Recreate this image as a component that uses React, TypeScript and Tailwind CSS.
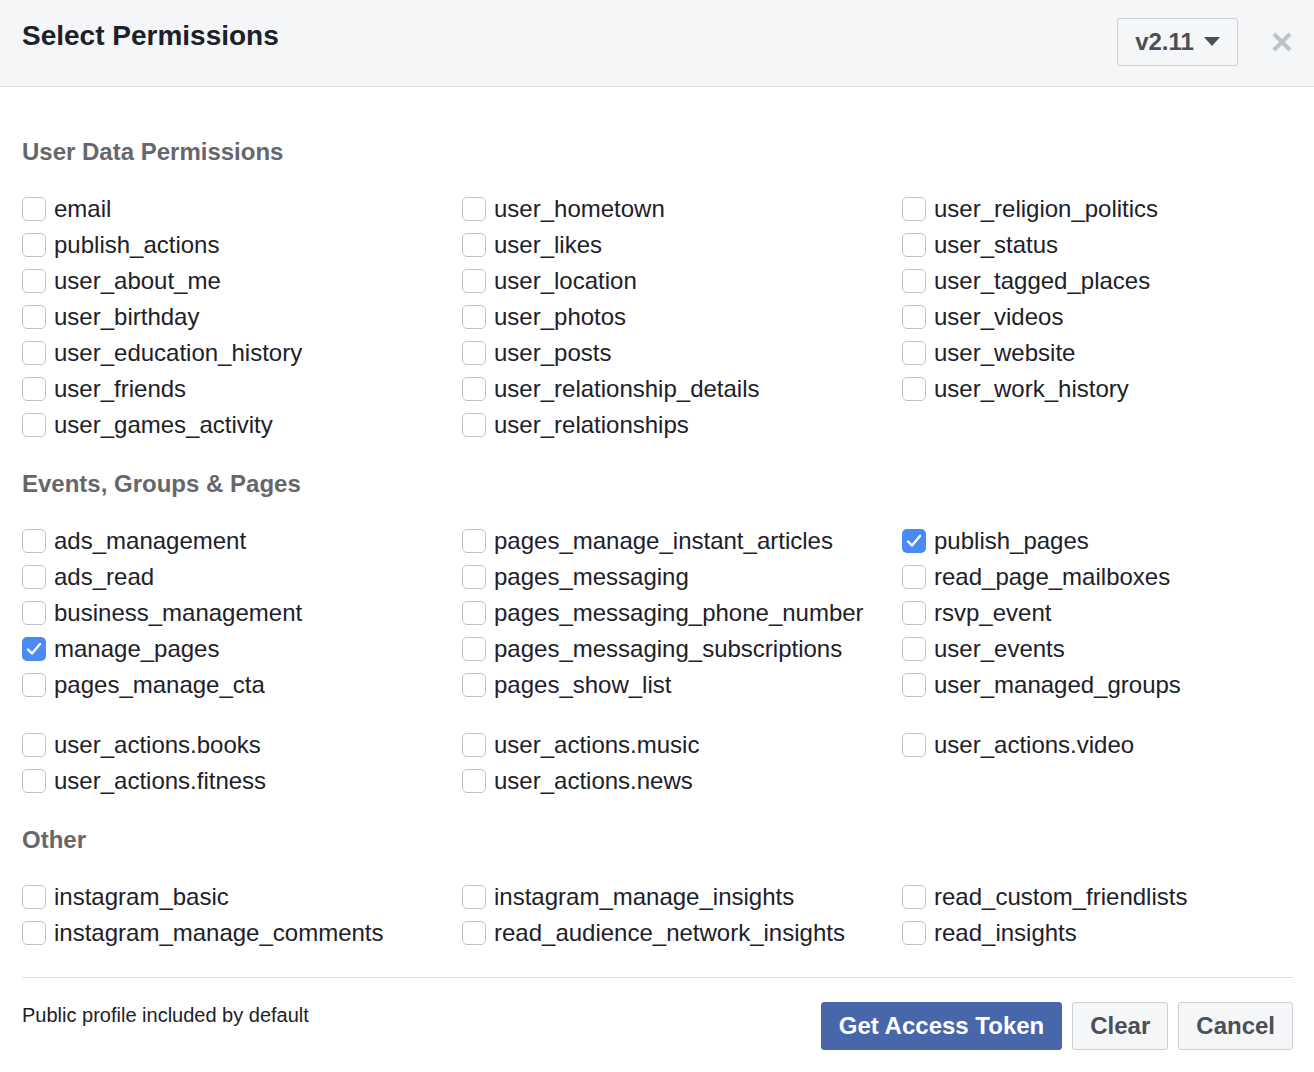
import { useState } from 'react'

// each section can hold several groups of three columns
const SECTIONS: { title: string; groups: string[][][] }[] = [
  {
    title: 'User Data Permissions',
    groups: [
      [
        ['email', 'publish_actions', 'user_about_me', 'user_birthday', 'user_education_history', 'user_friends', 'user_games_activity'],
        ['user_hometown', 'user_likes', 'user_location', 'user_photos', 'user_posts', 'user_relationship_details', 'user_relationships'],
        ['user_religion_politics', 'user_status', 'user_tagged_places', 'user_videos', 'user_website', 'user_work_history'],
      ],
    ],
  },
  {
    title: 'Events, Groups & Pages',
    groups: [
      [
        ['ads_management', 'ads_read', 'business_management', 'manage_pages', 'pages_manage_cta'],
        ['pages_manage_instant_articles', 'pages_messaging', 'pages_messaging_phone_number', 'pages_messaging_subscriptions', 'pages_show_list'],
        ['publish_pages', 'read_page_mailboxes', 'rsvp_event', 'user_events', 'user_managed_groups'],
      ],
      [
        ['user_actions.books', 'user_actions.fitness'],
        ['user_actions.music', 'user_actions.news'],
        ['user_actions.video'],
      ],
    ],
  },
  {
    title: 'Other',
    groups: [
      [
        ['instagram_basic', 'instagram_manage_comments'],
        ['instagram_manage_insights', 'read_audience_network_insights'],
        ['read_custom_friendlists', 'read_insights'],
      ],
    ],
  },
]

export default function App() {
  const [checked, setChecked] = useState<Record<string, boolean>>({
    manage_pages: true,
    publish_pages: true,
  })

  const toggle = (name: string) => setChecked(prev => ({ ...prev, [name]: !prev[name] }))

  return (
    <div className="w-[1314px] min-h-[1072px] bg-white font-['Liberation_Sans',Helvetica,Arial,sans-serif] text-[#1d2129]">
      {/* Header */}
      <div className="h-[87px] bg-[#f5f6f7] border-b border-[#dddfe2] flex items-start justify-between pl-[22px] pr-[20px]">
        <h1 className="mt-[20px] text-[28px] leading-[32px] font-bold text-[#1d2129]">Select Permissions</h1>
        <div className="flex items-center mt-[18px]">
          <button className="h-[48px] w-[121px] border border-[#ccd0d5] rounded-[3px] bg-[#f5f6f7] flex items-center justify-center gap-[10px] text-[24px] font-bold text-[#4b4f56]">
            v2.11
            <svg width="16" height="10" viewBox="0 0 16 10"><path d="M0 0h16L8 9z" fill="#4b4f56" /></svg>
          </button>
          <button className="ml-[32px] w-[24px] h-[24px] flex items-center justify-center">
            <svg width="22" height="22" viewBox="0 0 22 22">
              <path d="M3 3l16 16M19 3L3 19" stroke="#bec2c9" strokeWidth="4" />
            </svg>
          </button>
        </div>
      </div>

      {/* Body */}
      <div className="pl-[22px] pr-[21px] pt-[51px]">
        {SECTIONS.map((section, si) => (
          <div key={section.title} className={si > 0 ? 'mt-[27px]' : ''}>
            <h2 className="text-[24px] leading-[28px] font-bold text-[#65676b] mb-[25px]">{section.title}</h2>
            {section.groups.map((cols, gi) => (
              <div key={gi} className={`grid grid-cols-[440px_440px_1fr] ${gi > 0 ? 'mt-[24px]' : ''}`}>
                {cols.map((col, ci) => (
                  <div key={ci} className="flex flex-col">
                    {col.map(name => (
                      <Check key={name} label={name} checked={!!checked[name]} onChange={() => toggle(name)} />
                    ))}
                  </div>
                ))}
              </div>
            ))}
          </div>
        ))}

        <div className="mt-[26px] h-px bg-[#dddfe2]" />

        {/* Footer */}
        <div className="mt-[24px] flex items-start justify-between">
          <div className="pt-[1px] text-[20px] leading-[24px] text-[#1d2129]">Public profile included by default</div>
          <div className="flex gap-[10px]">
            <button className="h-[48px] px-[17px] rounded-[3px] bg-[#4867aa] border border-[#4267b2] text-white text-[24px] font-bold">
              Get Access Token
            </button>
            <button className="h-[48px] px-[17px] rounded-[3px] bg-[#f5f6f7] border border-[#ccd0d5] text-[#4b4f56] text-[24px] font-bold">
              Clear
            </button>
            <button className="h-[48px] px-[17px] rounded-[3px] bg-[#f5f6f7] border border-[#ccd0d5] text-[#4b4f56] text-[24px] font-bold">
              Cancel
            </button>
          </div>
        </div>
      </div>
    </div>
  )
}

function Check({ label, checked, onChange }: { label: string; checked: boolean; onChange: () => void }) {
  return (
    <label className="h-[36px] flex items-center cursor-pointer select-none" onClick={onChange}>
      {checked ? (
        <span className="w-[24px] h-[24px] rounded-[5px] bg-[#4a8af4] flex items-center justify-center shrink-0">
          <svg width="16" height="14" viewBox="0 0 16 14">
            <path d="M2 7.5l4 4L14 2" stroke="white" strokeWidth="2.4" fill="none" strokeLinecap="round" strokeLinejoin="round" />
          </svg>
        </span>
      ) : (
        <span className="w-[24px] h-[24px] rounded-[5px] border border-[#bec3c9] bg-white shrink-0" />
      )}
      <span className="ml-[8px] text-[24px] leading-[28px] text-[#1d2129]">{label}</span>
    </label>
  )
}
